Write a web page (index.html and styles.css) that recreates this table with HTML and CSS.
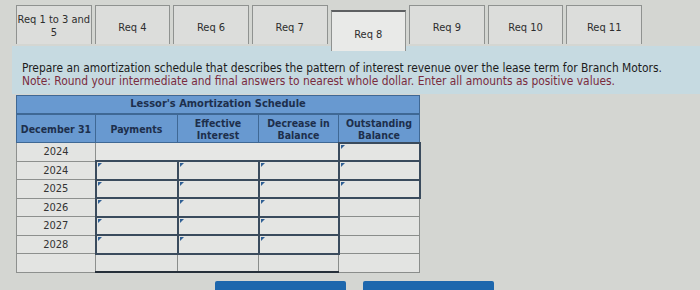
FILE: index.html
```html
<!DOCTYPE html>
<html lang="en">
<head>
<meta charset="utf-8">
<title>Lessor's Amortization Schedule</title>
<link rel="stylesheet" href="styles.css">
</head>
<body>
<div class="page">
  <nav class="tabs">
    <button class="tab two">Req 1 to 3 and<br>5</button>
    <button class="tab">Req 4</button>
    <button class="tab">Req 6</button>
    <button class="tab">Req 7</button>
    <button class="tab active">Req 8</button>
    <button class="tab">Req 9</button>
    <button class="tab">Req 10</button>
    <button class="tab">Req 11</button>
  </nav>
  <section class="band">
    <p class="question">Prepare an amortization schedule that describes the pattern of interest revenue over the lease term for Branch Motors.</p>
    <p class="note">Note: Round your intermediate and final answers to nearest whole dollar. Enter all amounts as positive values.</p>
  </section>
  <table class="sched">
    <colgroup>
      <col class="c-date"><col class="c-pay"><col class="c-int"><col class="c-dec"><col class="c-bal">
    </colgroup>
    <thead>
      <tr><th colspan="5" class="title">Lessor's Amortization Schedule</th></tr>
      <tr class="heads">
        <th>December 31</th>
        <th>Payments</th>
        <th>Effective<br>Interest</th>
        <th>Decrease in<br>Balance</th>
        <th>Outstanding<br>Balance</th>
      </tr>
    </thead>
    <tbody>
      <tr><td class="yr">2024</td><td colspan="3" class="blank"></td><td class="in"></td></tr>
      <tr><td class="yr">2024</td><td class="in"></td><td class="in"></td><td class="in"></td><td class="in"></td></tr>
      <tr><td class="yr">2025</td><td class="in"></td><td class="in"></td><td class="in"></td><td class="in"></td></tr>
      <tr><td class="yr">2026</td><td class="in"></td><td class="in"></td><td class="in"></td><td class="plain"></td></tr>
      <tr><td class="yr">2027</td><td class="in"></td><td class="in"></td><td class="in"></td><td class="plain"></td></tr>
      <tr><td class="yr">2028</td><td class="in"></td><td class="in"></td><td class="in"></td><td class="plain"></td></tr>
      <tr class="last"><td class="yr"></td><td class="plain bot"></td><td class="plain bot"></td><td class="plain bot"></td><td class="plain"></td></tr>
    </tbody>
  </table>
  <div class="actions">
    <button class="nav-btn" aria-label="Previous: Req 7"></button>
    <button class="nav-btn" aria-label="Next: Req 9"></button>
  </div>
</div>
</body>
</html>
```
FILE: styles.css
```css
* { box-sizing: border-box; }
html, body { margin: 0; padding: 0; }
body {
  width: 700px;
  height: 290px;
  overflow: hidden;
  background: #d4d6d2;
  font-family: "DejaVu Sans Condensed", "DejaVu Sans", sans-serif;
  font-stretch: condensed;
  color: #2a2a2a;
}
.page { padding-top: 5px; }

.tabs {
  display: grid;
  grid-template-columns: repeat(8, 1fr);
  column-gap: 3px;
  width: 626px;
  margin-left: 16px;
  height: 42px;
  align-items: start;
}
.tab {
  height: 39px;
  background: #dcdddb;
  border: 1px solid #8f9290;
  border-bottom: none;
  font: inherit;
  font-size: 11px;
  line-height: 13px;
  color: #2e2e2e;
  padding: 5px 0 0;
  text-align: center;
  position: relative;
}
.tab.two { padding-top: 1px; }
.tab.active {
  margin-top: 5px;
  height: 41px;
  background: #e9eae8;
  border-top: 2px solid #5e6062;
  z-index: 1;
}

.band {
  margin-left: 12px;
  margin-top: -1px;
  height: 48px;
  background: #c6dae1;
  padding: 16px 0 0 10px;
}
.band p { margin: 0; font-size: 11.9px; line-height: 13px; }
.question { color: #1c1c1c; }
.note { color: #7a2b3d; }

.sched {
  margin-left: 16px;
  margin-top: 1px;
  border-collapse: collapse;
  table-layout: fixed;
  width: 403px;
}
.c-date { width: 79px; }
.c-pay { width: 82px; }
.c-int { width: 81px; }
.c-dec { width: 80px; }
.c-bal { width: 81px; }

.sched th {
  background: #6899d0;
  color: #1d2f4c;
  font-weight: bold;
  border: 1px solid #3f6894;
  padding: 0;
  font-size: 10.5px;
  line-height: 12px;
}
.sched th.title { height: 18px; border-bottom: 2px solid #3f6894; font-size: 11px; }
.heads th { height: 29px; padding-top: 1px; }

.sched td {
  height: 18.5px;
  padding: 0;
  background: #e3e4e2;
  border: 1px solid #8d908e;
}
.sched td.yr { text-align: center; color: #333; font-size: 11px; }
.sched td.blank { background: #e6e7e5; border-color: #c5c7c5; }
.sched td.in {
  border: 2px solid #3a4b5d;
  background: #e4e5e3;
  position: relative;
}
.sched td.in::before {
  content: "";
  position: absolute;
  top: 1px;
  left: 1px;
  border-top: 4px solid #2f5f94;
  border-right: 4px solid transparent;
}
.sched td.plain { border-color: #8a8d8b; }
.sched td.bot { border-bottom: 2px solid #26303a; border-left-color: #3a4b5d; }

.actions {
  display: flex;
  gap: 17px;
  margin-left: 215px;
  margin-top: 8px;
}
.nav-btn {
  width: 131px;
  height: 10px;
  background: #1d67ad;
  border: none;
  border-radius: 2px 2px 0 0;
  padding: 0;
}
```
